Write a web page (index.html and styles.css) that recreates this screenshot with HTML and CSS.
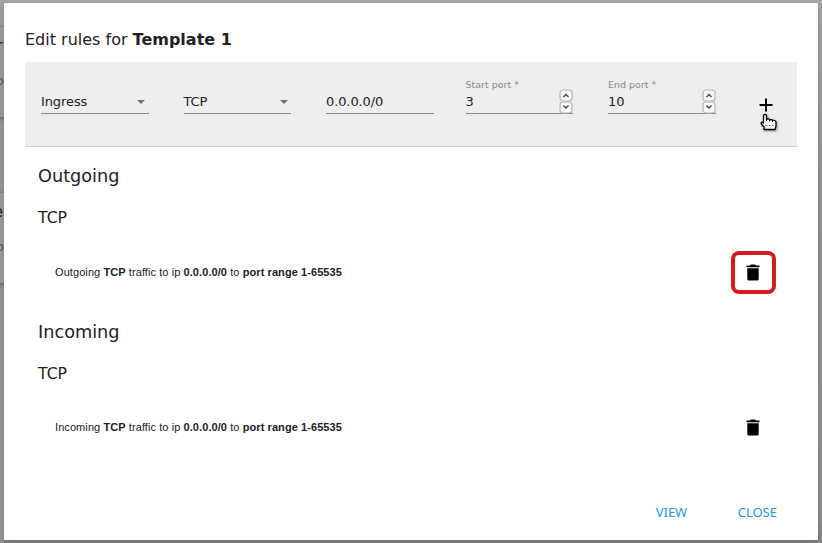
FILE: index.html
```
<!DOCTYPE html>
<html lang="en">
<head>
<meta charset="utf-8">
<title>Edit rules</title>
<link rel="stylesheet" href="styles.css">
</head>
<body>
<div class="backdrop">
  <div class="card card-top"><span class="name">r</span><span class="info">o</span></div>
  <div class="card card-bottom"><span class="name">e</span><span class="info">o</span></div>
</div>
<main class="dialog">
  <h1 class="title">Edit rules for <b>Template 1</b></h1>
  <form class="toolbar">
    <div class="field"><span class="value">Ingress</span><i class="caret"></i></div>
    <div class="field"><span class="value">TCP</span><i class="caret"></i></div>
    <div class="field"><span class="value">0.0.0.0/0</span></div>
    <div class="field port"><span class="label">Start port *</span><span class="value">3</span>
      <svg class="spin" width="14" height="25" viewBox="0 0 14 25"><g fill="#f8f8f8" stroke="#b4b4b4" stroke-width="1.200"><rect x="1" y="1" width="12" height="11" rx="3"/><rect x="1" y="13" width="12" height="11" rx="3"/></g><path d="M4.500 8 7 5.500 9.500 8M4.500 16.500 7 19 9.500 16.500" fill="none" stroke="#444" stroke-width="1.4"/></svg>
    </div>
    <div class="field"><span class="label">End port *</span><span class="value">10</span>
      <svg class="spin" width="14" height="25" viewBox="0 0 14 25"><g fill="#f8f8f8" stroke="#b4b4b4" stroke-width="1.200"><rect x="1" y="1" width="12" height="11" rx="3"/><rect x="1" y="13" width="12" height="11" rx="3"/></g><path d="M4.500 8 7 5.500 9.500 8M4.500 16.500 7 19 9.500 16.500" fill="none" stroke="#444" stroke-width="1.4"/></svg>
    </div>
    <div class="add">
      <svg width="14" height="14" viewBox="0 0 14 14"><path d="M7 .5V13.500M.5 7H13.500" stroke="#000" stroke-width="2"/></svg>
      <svg class="pointer" width="18" height="19" viewBox="0 0 18 19"><path d="M3.500 10V3C3.500.8 6.500.8 6.500 3V6.500C7.500 5.500 9.500 5.700 9.700 7 10.700 6.200 12.300 6.500 12.500 7.700 14 7 16 7.500 16 9.300V13L15 16.500H4V14L1.500 11C.5 9.300 2 8.300 3.500 10Z" fill="#fff" stroke="#000" stroke-width="1.3" stroke-linejoin="round"/><path d="M6.500 6V8M9.700 7V8.500M12.500 7.500V9" stroke="#000"/><path d="M5.500 12.500H14" stroke="#777" stroke-dasharray="2 1"/></svg>
    </div>
  </form>
  <section class="group">
    <h2>Outgoing</h2>
    <h3>TCP</h3>
    <div class="rule"><p>Outgoing <b>TCP</b> traffic to ip <b>0.0.0.0/0</b> to <b>port range 1-65535</b></p>
      <span class="trash marked"><svg width="14" height="17" viewBox="0 0 14 17"><path d="M.500 1.500H4L5 .500H9L10 1.500H13.500V3.200H.500ZM1.300 4.200H12.700V15Q12.700 16.500 11.200 16.500H2.800Q1.300 16.500 1.300 15Z"/></svg></span>
    </div>
  </section>
  <section class="group incoming">
    <h2>Incoming</h2>
    <h3>TCP</h3>
    <div class="rule"><p>Incoming <b>TCP</b> traffic to ip <b>0.0.0.0/0</b> to <b>port range 1-65535</b></p>
      <span class="trash"><svg width="14" height="17" viewBox="0 0 14 17"><path d="M.500 1.500H4L5 .500H9L10 1.500H13.500V3.200H.500ZM1.300 4.200H12.700V15Q12.700 16.500 11.200 16.500H2.800Q1.300 16.500 1.300 15Z"/></svg></span>
    </div>
  </section>
  <footer class="actions"><span class="view">VIEW</span><span class="close">CLOSE</span></footer>
</main>
</body>
</html>
```
FILE: styles.css
```
* { box-sizing: border-box; margin: 0; padding: 0; }
body {
  width: 822px; height: 543px; overflow: hidden; position: relative;
  padding: 3px 4px;
  background: linear-gradient(#a8a8a8, #999 30%, #929292 95%, #858585);
  font-family: "DejaVu Sans", sans-serif; color: #212121;
}
.backdrop { position: absolute; left: 0; top: 0; width: 4px; height: 543px; background: linear-gradient(#a6a6a6, #999896 25%, #999896); overflow: hidden; }
.card { position: absolute; left: -10px; width: 20px; height: 90px; background: #a09f9d; box-shadow: 0 1px 4px #555; }
.card-top { top: 27px; }
.card-bottom { top: 193px; }
.card span { position: absolute; right: 7px; line-height: 16px; }
.card .name { top: 11px; font-size: 15px; }
.card .info { top: 46px; font-size: 13px; right: 6px; color: #555; }
.dialog {
  position: relative; width: 814px; height: 537px; background: #fff;
  border-radius: 1px; padding: 27px 21px 0; box-shadow: 0 2px 8px rgba(0,0,0,.2);
}
.title { font-size: 16px; font-weight: 400; line-height: 20px; margin-bottom: 12px; white-space: nowrap; }
.toolbar {
  display: flex; height: 85px; background: #eee; border-bottom: 1px solid #ccc;
  padding: 16px 16px 0; gap: 35px;
}
.field { position: relative; flex: none; width: 107.500px; height: 36px; border-bottom: 1px solid #888; display: flex; align-items: flex-end; padding-bottom: 3px; }
.port { margin-left: -3px; }
.value { font-size: 13px; line-height: 16px; letter-spacing: -.1px; }
.label { position: absolute; left: 0; top: 1px; font-size: 9.500px; line-height: 12px; color: #888; white-space: nowrap; }
.caret { margin: 0 3.500px 6px auto; border: 4px solid transparent; border-top-color: #707070; border-bottom: 0; }
.spin { position: absolute; right: 0; bottom: -1px; }
.add { position: relative; width: 18px; padding-top: 20px; margin-left: 8.500px; }
.add svg { display: block; }
.add .pointer { position: absolute; left: 1px; top: 35px; filter: drop-shadow(1px 1px 1px rgba(0,0,0,.4)); }
.group { height: 156px; padding: 18px 0 0 13px; }
.group h2 { font-size: 17.700px; font-weight: 400; line-height: 22px; }
.group h3 { font-size: 15.700px; font-weight: 400; line-height: 20px; margin-top: 21px; }
.rule { display: flex; align-items: center; justify-content: space-between; height: 43px; margin-top: 23px; padding: 0 21px 0 17px; }
.incoming .rule { margin-top: 22px; }
.rule p { font: 11px/15px "Liberation Sans", Arial, sans-serif; letter-spacing: .08px; white-space: nowrap; }
.trash { display: flex; align-items: center; justify-content: center; width: 45px; height: 43px; padding: 0 1px 1px 0; }
.marked { border: 4px solid #d51c1c; border-radius: 8px; }
.actions { display: flex; justify-content: flex-end; gap: 50.500px; padding-right: 20px; margin-top: 44px; font: 13px/18px "Noto Sans", sans-serif; color: #2196f3; }
```
